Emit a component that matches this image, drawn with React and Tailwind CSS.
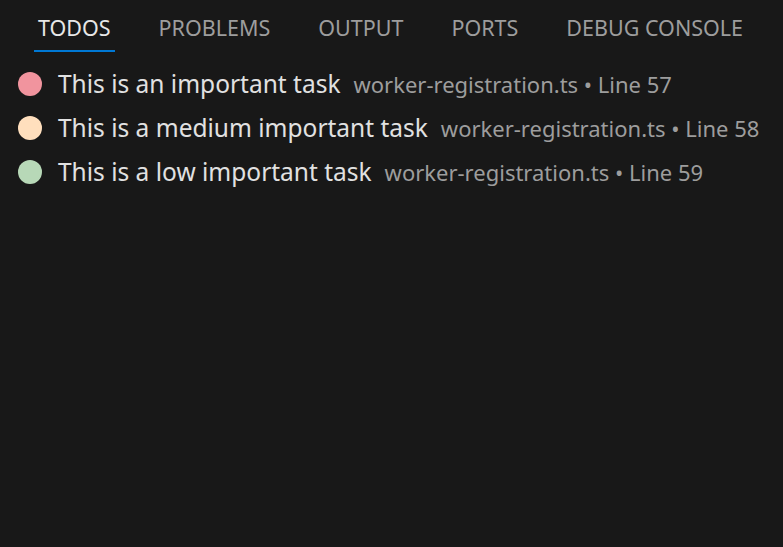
import React from "react";

const tabs = ["TODOS", "PROBLEMS", "OUTPUT", "PORTS", "DEBUG CONSOLE"];

const todos = [
  { text: "This is an important task", line: 57, color: "bg-[#f1949e]" },
  { text: "This is a medium important task", line: 58, color: "bg-[#ffdfbd]" },
  { text: "This is a low important task", line: 59, color: "bg-[#b7d8b7]" },
];

export default function App() {
  return (
    <div className="w-[783px] h-[547px] bg-[#181818] font-['Noto_Sans',sans-serif] overflow-hidden">
      <div className="flex items-start gap-[40px] pl-[34px] pt-[12px]">
        {tabs.map((tab, i) => (
          <div key={tab} className="flex flex-col">
            <span
              className={
                "px-[4px] text-[21.5px] leading-[32px] " +
                (i === 0 ? "text-[#e7e7e7]" : "text-[#9d9d9d]")
              }
            >
              {tab}
            </span>
            {i === 0 && <div className="h-[2px] mt-[6px] bg-[#0078d4]" />}
          </div>
        ))}
      </div>
      <div className="flex flex-col pt-[10px]">
        {todos.map((t) => (
          <div key={t.line} className="flex items-center h-[44px] pl-[18px]">
            <span className={"w-[24px] h-[24px] rounded-full shrink-0 " + t.color} />
            <span className="ml-[16px] text-[24.5px] text-[#e1e1e1] whitespace-nowrap">{t.text}</span>
            <span className="ml-[13px] text-[22px] text-[#9d9d9d] whitespace-nowrap">
              worker-registration.ts • Line {t.line}
            </span>
          </div>
        ))}
      </div>
    </div>
  );
}
